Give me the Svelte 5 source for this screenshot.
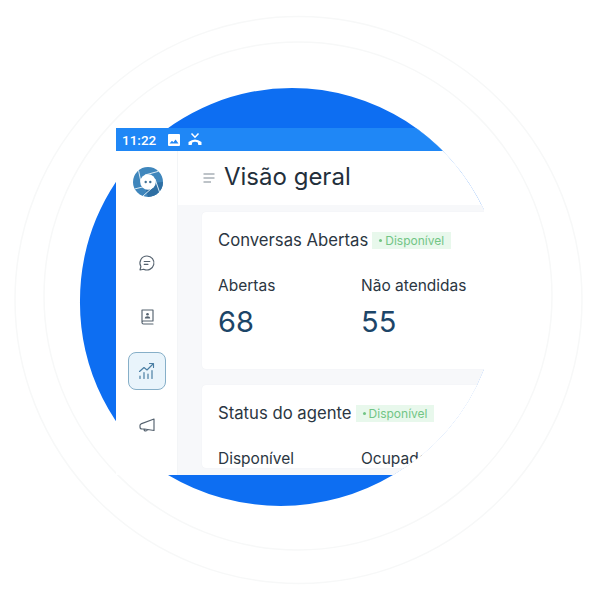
<script>
  const cards = [
    { title: 'Conversas Abertas', stats: [{ label: 'Abertas', value: '68' }, { label: 'Não atendidas', value: '55' }] },
    { title: 'Status do agente', stats: [{ label: 'Disponível' }, { label: 'Ocupado' }] }
  ];
</script>

<div class="canvas">
  <svg class="art" width="600" height="600" viewBox="0 0 600 600" aria-hidden="true">
    <circle cx="298.5" cy="300" r="283.5" fill="none" stroke="#f7f8f8" stroke-width="1.5" />
    <circle cx="298" cy="296" r="254" fill="none" stroke="#f7f8f8" stroke-width="1.5" />
    <path d="M80 300 A212 212 0 0 1 292 88 A212 212 0 0 1 484 210 V369 A210 210 0 0 1 393 475 A220 220 0 0 1 168 475 A212 212 0 0 1 80 300 Z" fill="#0d6ef2" />
  </svg>

  <div class="screen">
    <div class="status">
      <span class="time">11:22</span>
      <svg class="sicon" width="12" height="12" viewBox="0 0 12 12"><path fill="#fff" fill-rule="evenodd" d="M1 0h10a1 1 0 0 1 1 1v10a1 1 0 0 1-1 1H1a1 1 0 0 1-1-1V1a1 1 0 0 1 1-1Zm.5 9.600h9L7.600 5.600 5.400 8.300 4 6.800Z" /></svg>
      <svg class="sicon call" width="14" height="13" viewBox="0 0 14 13"><path d="M3.500 .5 7 4.200 10.500 .5" fill="none" stroke="#fff" stroke-width="1.500" /><path fill="#fff" d="M.5 9Q7 3.800 13.500 9V12H10.300L9.800 9.500Q7 8 4.200 9.500L3.700 12H.5Z" /></svg>
    </div>

    <div class="body">
      <aside class="side">
        <svg class="logo" width="30" height="30" viewBox="0 0 30 30">
          <circle cx="15" cy="15" r="15" fill="#3f86bc" />
          <path d="M15 30A15 15 0 0 0 30 15L20 16 13 23Z" fill="#2f6fa3" />
          <path d="M8 15 5.500 3.400M12 8 25.500 4.300M22 12 26.500 25M19 21 10 29M9.500 20 1.500 22" stroke="#dcebf5" stroke-width="1" fill="none" />
          <circle cx="15" cy="15" r="7.800" fill="#fff" />
          <circle cx="12.700" cy="15" r="1.200" fill="#3f6f94" />
          <circle cx="17.300" cy="15" r="1.200" fill="#3f6f94" />
        </svg>

        <nav class="nav">
          <span class="item">
            <svg width="18" height="18" viewBox="0 0 18 18"><path d="M9 2a7 7 0 1 1-3.300 13.200L2 16l.9-3.500A7 7 0 0 1 9 2Z M6.200 7.500h5.600 M6.200 10.300h3.800" /></svg>
          </span>
          <span class="item">
            <svg width="18" height="18" viewBox="0 0 18 18"><path d="M4 2h11v11H5.200A1.400 1.400 0 0 0 4 14.500ZM4 14.500A1.500 1.500 0 0 0 5.500 16H15" /><circle cx="9.500" cy="6.300" r="1.300" class="solid" /><path class="solid" d="M6.800 10.500c0-1.400 1.200-2.200 2.700-2.200s2.700.8 2.700 2.200Z" /></svg>
          </span>
          <span class="item active">
            <svg width="20" height="20" viewBox="0 0 20 20"><path d="M2.500 10.500 7 6.500l3 2.500 6-6M12.500 2.500h4v4" /><path class="bars" d="M3 17.500v-2.500M7 17.500v-6M11 17.500v-4.500M15 17.500V9.500" /></svg>
          </span>
          <span class="item">
            <svg width="18" height="18" viewBox="0 0 18 18"><path d="M16 3v11.500L6.500 13H4a2 2 0 0 1-2-2V9.500a1.800 1.800 0 0 1 1-1.600ZM6 13c0 1.400.9 2 1.800 2s1.400-.5 1.600-1.300" /></svg>
          </span>
        </nav>
      </aside>

      <main class="main">
        <header class="head">
          <svg width="12" height="10" viewBox="0 0 12 10"><path d="M.5 1h11M.5 5h11M.5 9h7.500" stroke="#7d8791" stroke-width="1" fill="none" /></svg>
          <h1>Visão geral</h1>
        </header>

        <div class="content">
          {#each cards as card}
            <section class="card">
              <div class="row">
                <h2>{card.title}</h2>
                <span class="badge"><i></i>Disponível</span>
              </div>
              <div class="stats">
                {#each card.stats as s}
                  <div class="stat">
                    <div class="label">{s.label}</div>
                    {#if s.value}<div class="value">{s.value}</div>{/if}
                  </div>
                {/each}
              </div>
            </section>
          {/each}
        </div>
      </main>
    </div>
  </div>
</div>

<style>
  :global(body) { background: #fff; }
  .canvas { position: relative; width: 600px; height: 600px; overflow: hidden; background: #fff; font-family: Inter, "Liberation Sans", sans-serif; }
  .art { position: absolute; inset: 0; }
  .screen {
    position: absolute; left: 116px; top: 128px; width: 368px; height: 347px;
    display: flex; flex-direction: column; background: #fff;
    clip-path: path("M0 0 H300 A212 212 0 0 1 368 82 V241 A210 210 0 0 1 277 347 H0 Z");
  }
  .status { height: 23px; flex: none; background: #1f87f6; display: flex; align-items: center; padding-left: 6px; color: #fff; }
  .time { font: 500 13.500px Roboto, sans-serif; width: 46px; }
  .sicon { flex: none; }
  .call { margin-left: 8px; }
  .body { flex: 1; min-height: 0; display: flex; }
  .side { width: 62px; flex: none; display: flex; flex-direction: column; align-items: center; border-right: 1px solid #f3f5f7; box-sizing: border-box; padding-top: 16px; }
  .logo { flex: none; margin-left: 2px; }
  .nav { display: flex; flex-direction: column; align-items: center; margin-top: 47px; margin-left: 1px; }
  .item { width: 38px; height: 38px; display: flex; align-items: center; justify-content: center; margin-bottom: 16px; box-sizing: border-box; }
  .item svg { fill: none; stroke: #55626f; stroke-width: 1.150; stroke-linejoin: round; stroke-linecap: round; }
  .item .solid { fill: #55626f; stroke: none; }
  .item.active { background: #e9f4fb; border: 1px solid #86afc8; border-radius: 8px; }
  .item.active svg { stroke: #4a7ea3; }
  .item.active .bars { stroke-width: 1.200; }
  .main { flex: 1; min-width: 0; display: flex; flex-direction: column; }
  .head { height: 54px; flex: none; display: flex; align-items: center; padding-left: 25px; gap: 9px; }
  h1 { margin: 0; font-size: 24px; font-weight: 400; color: #232f3b; line-height: 1; position: relative; top: -1px; }
  .content { flex: 1; background: #f7f8fa; padding: 7px 0 0 24px; display: flex; flex-direction: column; gap: 16px; overflow: hidden; }
  .card { flex: none; background: #fff; border-radius: 4px 0 0 4px; box-shadow: 0 0 1px #e6e9ed; padding: 19px 16px 0; box-sizing: border-box; }
  .card:first-child { height: 157px; }
  .row { display: flex; align-items: center; gap: 4px; height: 18px; }
  h2 { margin: 0; font-size: 16.700px; font-weight: 400; color: #2b3642; white-space: nowrap; }
  .badge { display: inline-flex; align-items: center; height: 17px; padding: 0 7px; background: #e8f8ec; color: #72c585; font-size: 12px; white-space: nowrap; gap: 3px; }
  .badge i { width: 3px; height: 3px; border-radius: 50%; background: #72c585; }
  .stats { display: flex; margin-top: 28px; }
  .stat { width: 143px; flex: none; }
  .label { font-size: 15.500px; color: #2b3642; line-height: 18px; white-space: nowrap; }
  .value { font-size: 29px; color: #1c4568; line-height: 34px; margin-top: 10px; }
</style>
